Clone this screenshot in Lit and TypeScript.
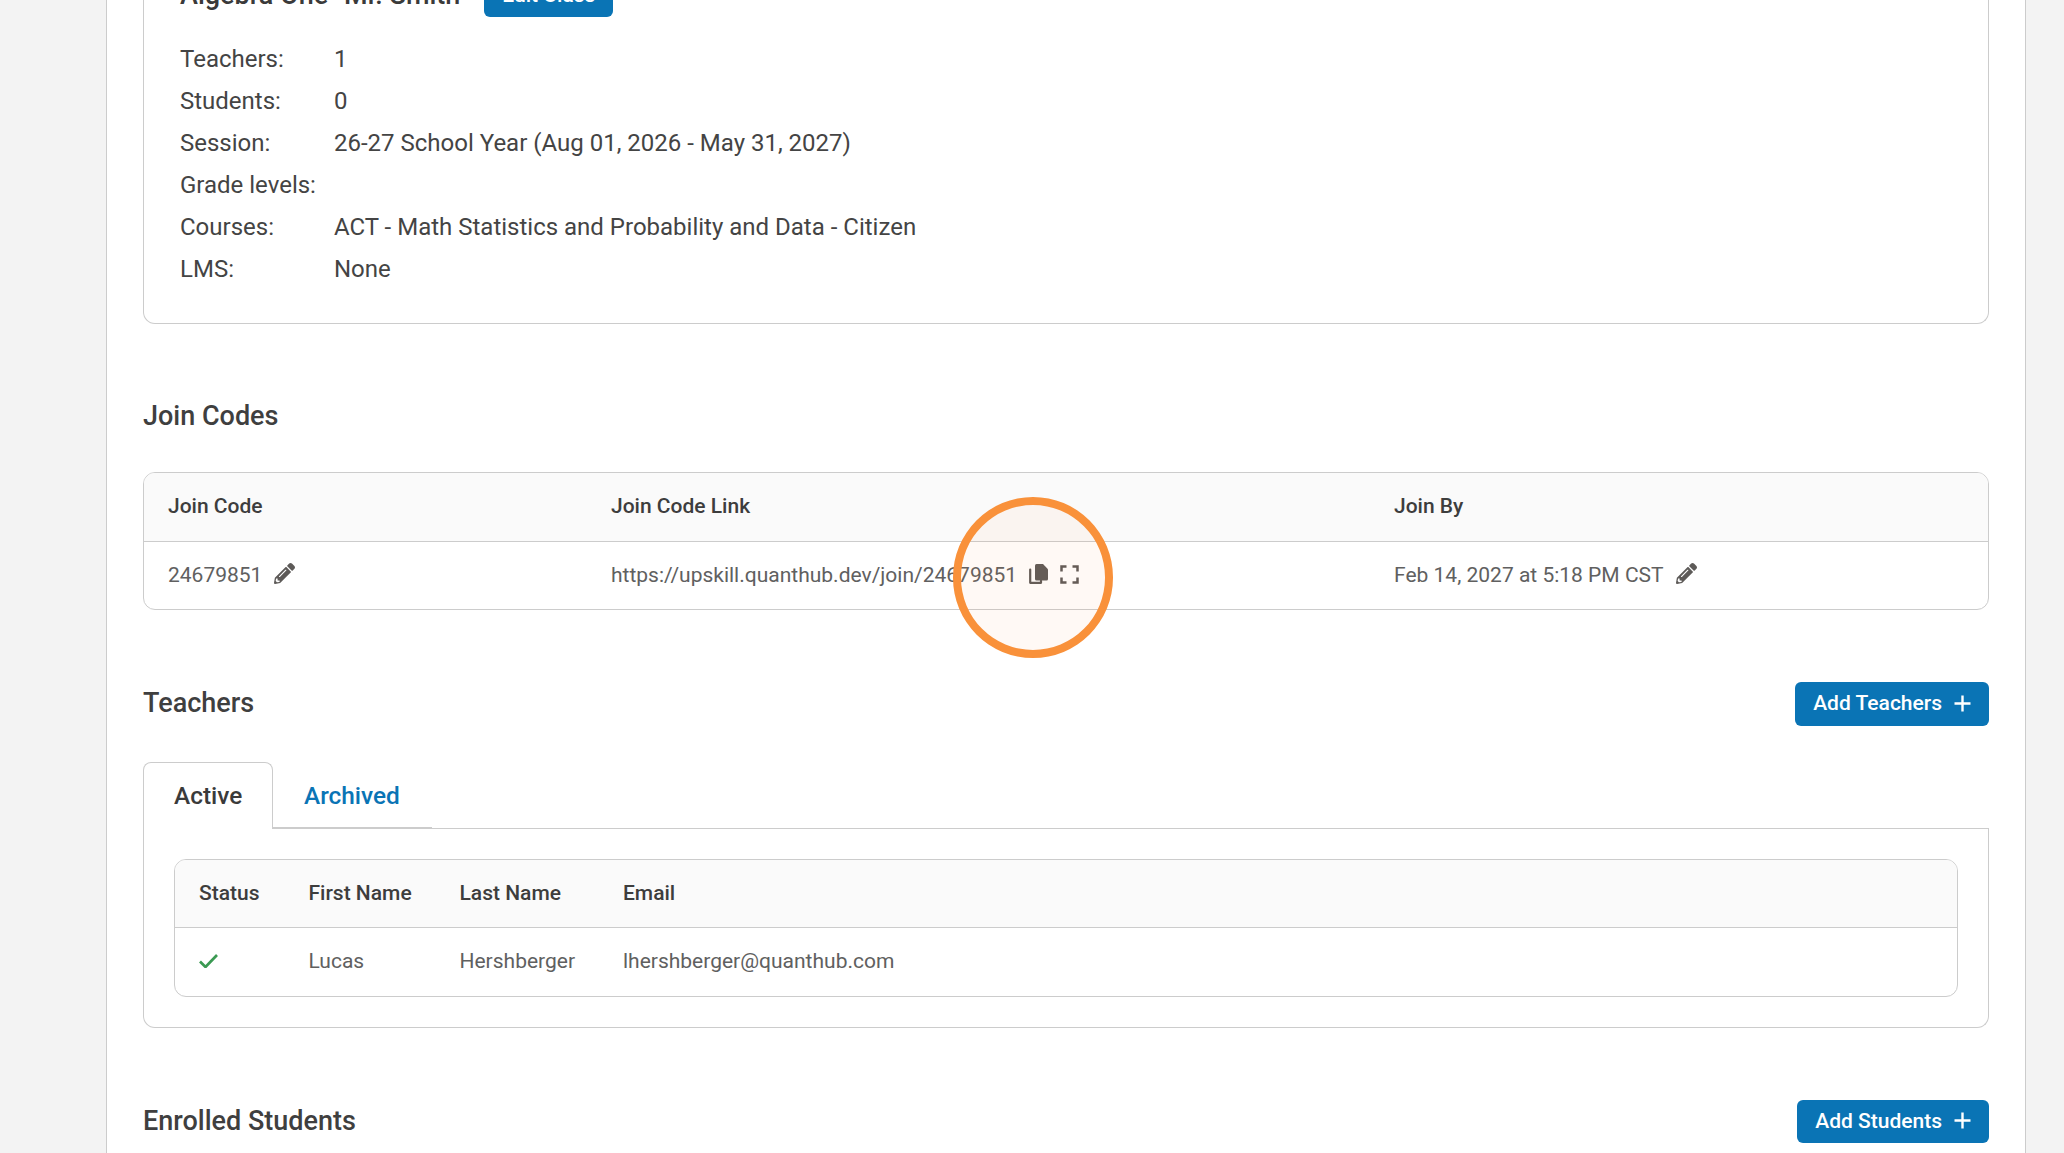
import { LitElement, html, css } from "lit";
import { customElement } from "lit/decorators.js";

const pencil = html`<svg class="pencil" viewBox="0 0 512 512" aria-hidden="true"><path fill="currentColor" d="M497.9 142.1l-46.1 46.1c-4.7 4.7-12.3 4.7-17 0l-111-111c-4.7-4.7-4.7-12.3 0-17l46.1-46.1c18.7-18.7 49.1-18.7 67.9 0l60.1 60.1c18.8 18.7 18.8 49.1 0 67.9zM284.2 99.8L21.6 362.4.4 483.9c-2.9 16.4 11.4 30.6 27.8 27.8l121.5-21.3 262.6-262.6c4.7-4.7 4.7-12.3 0-17l-111-111c-4.8-4.7-12.4-4.7-17.1 0zM124.1 339.9c-5.5-5.5-5.5-14.3 0-19.8l154-154c5.5-5.5 14.3-5.5 19.8 0s5.5 14.3 0 19.8l-154 154c-5.5 5.5-14.3 5.5-19.8 0zM88 424h48v36.3l-64.5 11.3-31.1-31.1L51.7 376H88v48z"/></svg>`;

const plus = html`<svg class="plus" viewBox="0 0 17 17" aria-hidden="true"><path d="M8.500 0.500v16M0.500 8.500h16" stroke="currentColor" stroke-width="2.400" fill="none"/></svg>`;

const copy = html`<svg class="copy" viewBox="0 0 19 20" aria-hidden="true"><path d="M1.200 5.500v13.300h10.800v-2" fill="none" stroke="#5d5a58" stroke-width="2.200" stroke-linejoin="round" stroke-linecap="round"/><path fill="#5d5a58" d="M7.500 0h6.500l5 5.300v9.700a1.500 1.500 0 0 1-1.500 1.500h-10a1.500 1.500 0 0 1-1.500-1.500V1.500a1.500 1.500 0 0 1 1.500-1.500z"/></svg>`;

const expand = html`<svg class="expand" viewBox="0 0 19 19" aria-hidden="true"><path d="M1.500 6.500V1.500H6.500M12.500 1.500H17.500V6.500M17.500 12.500V17.500H12.500M6.500 17.500H1.500V12.500" fill="none" stroke="#5d5a58" stroke-width="2.500"/></svg>`;

const check = html`<svg class="check" viewBox="0 0 19 14" aria-hidden="true"><path d="M1 7.500L6.500 13L18 1" fill="none" stroke="#3b9a53" stroke-width="2.700"/></svg>`;

@customElement("app-root")
export class AppRoot extends LitElement {
  static styles = css`
    :host {
      display: block;
      position: relative;
      height: 1153px;
      overflow: hidden;
      background: #f3f3f3;
      font-family: Roboto, "Liberation Sans", sans-serif;
      color: #444;
    }
    .page {
      box-sizing: border-box;
      margin: -60px 0 0 106px;
      width: 1920px;
      padding: 0 36px;
      background: #fff;
      border-left: 1px solid #ccc;
      border-right: 1px solid #ccc;
      height: 1300px;
    }
    .card {
      box-sizing: border-box;
      height: 384px;
      padding: 33px 36px 0;
      border: 1px solid #ccc;
      border-top: none;
      border-radius: 0 0 12px 12px;
    }
    .title-row {
      display: flex;
      align-items: center;
      gap: 24px;
      height: 44px;
      margin-bottom: 21px;
    }
    .title {
      font-size: 27px;
      font-weight: 500;
      color: #3a3a3a;
    }
    .btn {
      display: inline-flex;
      align-items: center;
      box-sizing: border-box;
      background: #0a74b5;
      color: #fff;
      font-size: 21px;
      font-weight: 500;
      border-radius: 6px;
    }
    .btn.edit {
      width: 129px;
      height: 44px;
      justify-content: center;
    }
    .btn.add {
      height: 44px;
      padding: 0 18px 2px;
      gap: 12px;
    }
    .btn.students {
      height: 43px;
    }
    .plus {
      width: 17px;
      height: 17px;
    }
    .details {
      display: grid;
      grid-template-columns: 154px 1fr;
      grid-auto-rows: 42px;
      align-items: center;
      font-size: 24px;
      color: #444;
    }
    h2 {
      margin: 0;
      font-size: 27px;
      font-weight: 500;
      color: #3f3f3f;
    }
    .join-head {
      margin-top: 75px;
      height: 34px;
      line-height: 34px;
    }
    .table {
      border: 1px solid #ccc;
      border-radius: 12px;
      overflow: hidden;
      font-size: 21px;
    }
    .join {
      margin-top: 39px;
    }
    .row {
      display: grid;
      box-sizing: border-box;
      align-items: center;
      padding: 0 0 2px 24px;
    }
    .join .row {
      grid-template-columns: 443px 783px 1fr;
    }
    .staff .row {
      grid-template-columns: 109.500px 151px 163.500px 1fr;
    }
    .thead {
      height: 69px;
      background: #fafafa;
      border-bottom: 1px solid #ccc;
      font-weight: 500;
      color: #3d3d3d;
    }
    .tbody {
      height: 67px;
      color: #606060;
    }
    .cell {
      display: flex;
      align-items: center;
      gap: 12px;
    }
    .pencil {
      width: 21px;
      height: 21px;
      color: #5d5a58;
      margin-top: -2px;
    }
    .copy {
      width: 19px;
      height: 20px;
      margin-top: -1px;
    }
    .expand {
      width: 19px;
      height: 19px;
      margin-top: -1px;
    }
    .check {
      width: 19px;
      height: 14px;
    }
    .section-head {
      display: flex;
      align-items: center;
      justify-content: space-between;
    }
    .teachers-head {
      margin-top: 72px;
    }
    .teachers-head h2 {
      margin-bottom: 3px;
    }
    .tabs {
      display: flex;
      margin-top: 36px;
      height: 67px;
      position: relative;
      font-size: 24.400px;
      font-weight: 500;
    }
    .tab {
      box-sizing: border-box;
      height: 67px;
      display: flex;
      align-items: center;
    }
    .tab.active {
      padding: 0 30px 1px;
      border: 1px solid #ccc;
      border-bottom: none;
      border-radius: 8px 8px 0 0;
      color: #3a3a3a;
      width: 130px;
    }
    .tab.other {
      padding: 2px 31px 0;
      color: #0a74b5;
      border-bottom: 2px solid #ccc;
      width: 159px;
    }
    .tab-line {
      position: absolute;
      left: 130px;
      right: 0;
      bottom: 0;
      height: 1px;
      background: #ccc;
    }
    .panel {
      box-sizing: border-box;
      height: 199px;
      padding: 30px;
      border: 1px solid #ccc;
      border-top: none;
      border-radius: 0 0 12px 12px;
    }
    .staff .thead {
      height: 68px;
    }
    .staff .tbody {
      height: 68px;
    }
    .students-head {
      margin-top: 72px;
    }
    .students-head h2 {
      margin-bottom: 2px;
    }
    .highlight {
      position: absolute;
      left: 952.500px;
      top: 497px;
      width: 160.500px;
      height: 161px;
      box-sizing: border-box;
      border: 8px solid #f9913a;
      border-radius: 50%;
      background: rgba(249, 145, 58, 0.05);
    }
  `;

  render() {
    const rows: [string, string][] = [
      ["Teachers:", "1"],
      ["Students:", "0"],
      ["Session:", "26-27 School Year (Aug 01, 2026 - May 31, 2027)"],
      ["Grade levels:", ""],
      ["Courses:", "ACT - Math Statistics and Probability and Data - Citizen"],
      ["LMS:", "None"],
    ];
    return html`
      <div class="page">
        <section class="card">
          <div class="title-row">
            <span class="title">Algebra One- Mr. Smith</span>
            <span class="btn edit">Edit Class</span>
          </div>
          <div class="details">
            ${rows.map(([k, v]) => html`<span>${k}</span><span>${v}</span>`)}
          </div>
        </section>

        <h2 class="join-head">Join Codes</h2>
        <div class="table join">
          <div class="row thead">
            <span>Join Code</span><span>Join Code Link</span><span>Join By</span>
          </div>
          <div class="row tbody">
            <span class="cell">24679851 ${pencil}</span>
            <span class="cell">https://upskill.quanthub.dev/join/24679851 ${copy} ${expand}</span>
            <span class="cell">Feb 14, 2027 at 5:18 PM CST ${pencil}</span>
          </div>
        </div>

        <div class="section-head teachers-head">
          <h2>Teachers</h2>
          <span class="btn add">Add Teachers ${plus}</span>
        </div>
        <div class="tabs">
          <div class="tab active">Active</div>
          <div class="tab other">Archived</div>
          <div class="tab-line"></div>
        </div>
        <div class="panel">
          <div class="table staff">
            <div class="row thead">
              <span>Status</span><span>First Name</span><span>Last Name</span><span>Email</span>
            </div>
            <div class="row tbody">
              <span class="cell">${check}</span><span>Lucas</span><span>Hershberger</span><span>lhershberger@quanthub.com</span>
            </div>
          </div>
        </div>

        <div class="section-head students-head">
          <h2>Enrolled Students</h2>
          <span class="btn add students">Add Students ${plus}</span>
        </div>
      </div>
      <div class="highlight"></div>
    `;
  }
}
